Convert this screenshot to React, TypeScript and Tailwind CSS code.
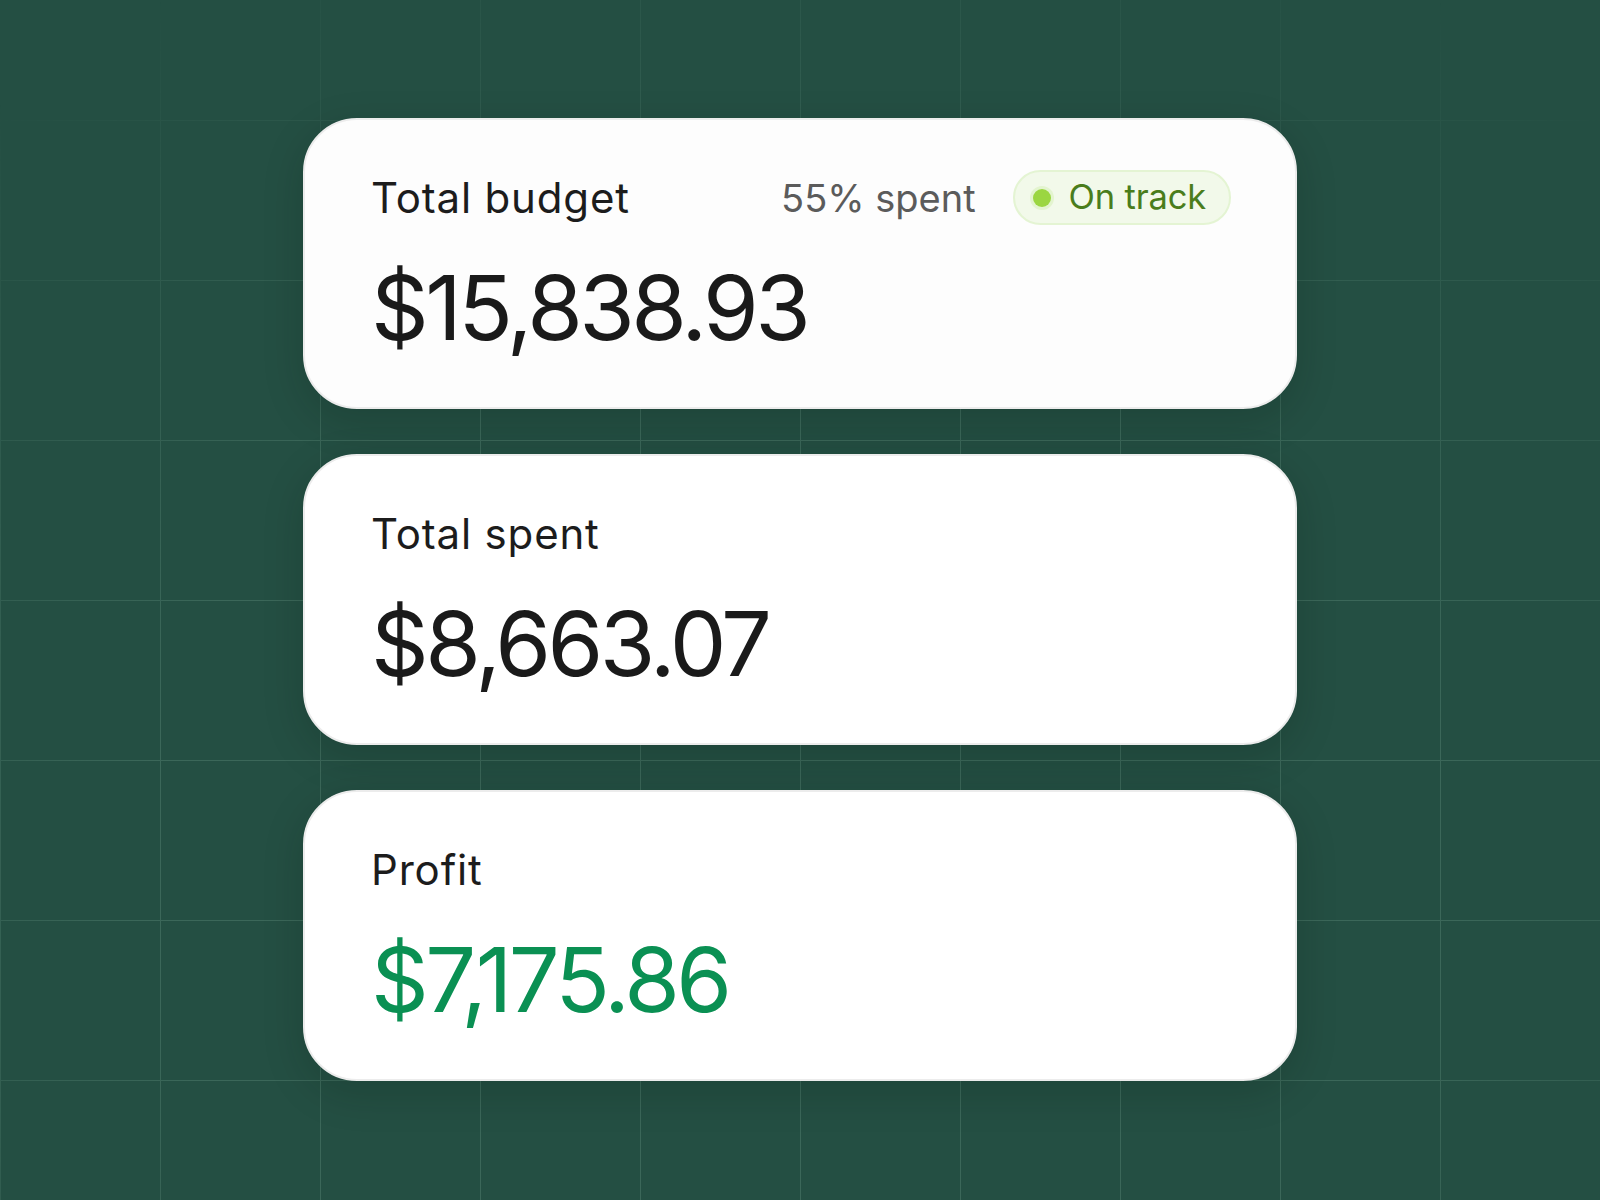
const FONT = "font-['Inter','Liberation_Sans',sans-serif]";

function OnTrackBadge() {
  return (
    <div className="flex items-center gap-[18px] h-[55px] pl-[18px] pr-[23px] rounded-full bg-[#f2f9ea] border-2 border-[#e4f4d3]">
      <span className="w-[18px] h-[18px] rounded-full bg-[#9bd641] ring-[3px] ring-[#e3f4cf]" />
      <span className="text-[34.5px] leading-none text-[#4a7d1c] tracking-[-0.005em]">On track</span>
    </div>
  );
}

function StatCard({
  label,
  amount,
  amountClass = "text-[#1a1a1a]",
  cardBg = "bg-white",
  right,
}: {
  label: string;
  amount: string;
  amountClass?: string;
  cardBg?: string;
  right?: React.ReactNode;
}) {
  return (
    <div
      className={`w-[994px] h-[291px] rounded-[54px] ${cardBg} border-2 border-[#ececec] shadow-[0_12px_40px_rgba(0,20,10,0.18)] pl-[66px] pr-[64px] pt-[50px]`}
    >
      <div className="flex items-center justify-between h-[55px]">
        <span className="text-[42px] leading-none text-[#1c1c1c] tracking-[0.02em]">{label}</span>
        {right}
      </div>
      <div className={`mt-[38px] text-[90px] leading-none tracking-[-0.04em] ${amountClass}`}>{amount}</div>
    </div>
  );
}

export default function App() {
  return (
    <div className={`relative w-full h-[1200px] overflow-hidden bg-[#244f43] ${FONT}`}>
      {/* grid backdrop */}
      <div className="absolute inset-0 bg-[linear-gradient(to_right,#3b6759_1.5px,transparent_1.5px),linear-gradient(to_bottom,#3b6759_1.5px,transparent_1.5px)] bg-size-[160px_160px] bg-position-[0px_120px] [mask-image:radial-gradient(ellipse_75%_85%_at_50%_72%,black_55%,transparent_100%)]" />

      <div className="relative flex flex-col items-center pt-[118px] gap-[45px]">
        <StatCard
          label="Total budget"
          amount="$15,838.93"
          cardBg="bg-[#fdfdfd]"
          right={
            <div className="flex items-center gap-[37px]">
              <span className="text-[38px] leading-none text-[#5b5b5b]">55% spent</span>
              <OnTrackBadge />
            </div>
          }
        />
        <StatCard label="Total spent" amount="$8,663.07" />
        <StatCard label="Profit" amount="$7,175.86" amountClass="text-[#0a9053]" />
      </div>
    </div>
  );
}
